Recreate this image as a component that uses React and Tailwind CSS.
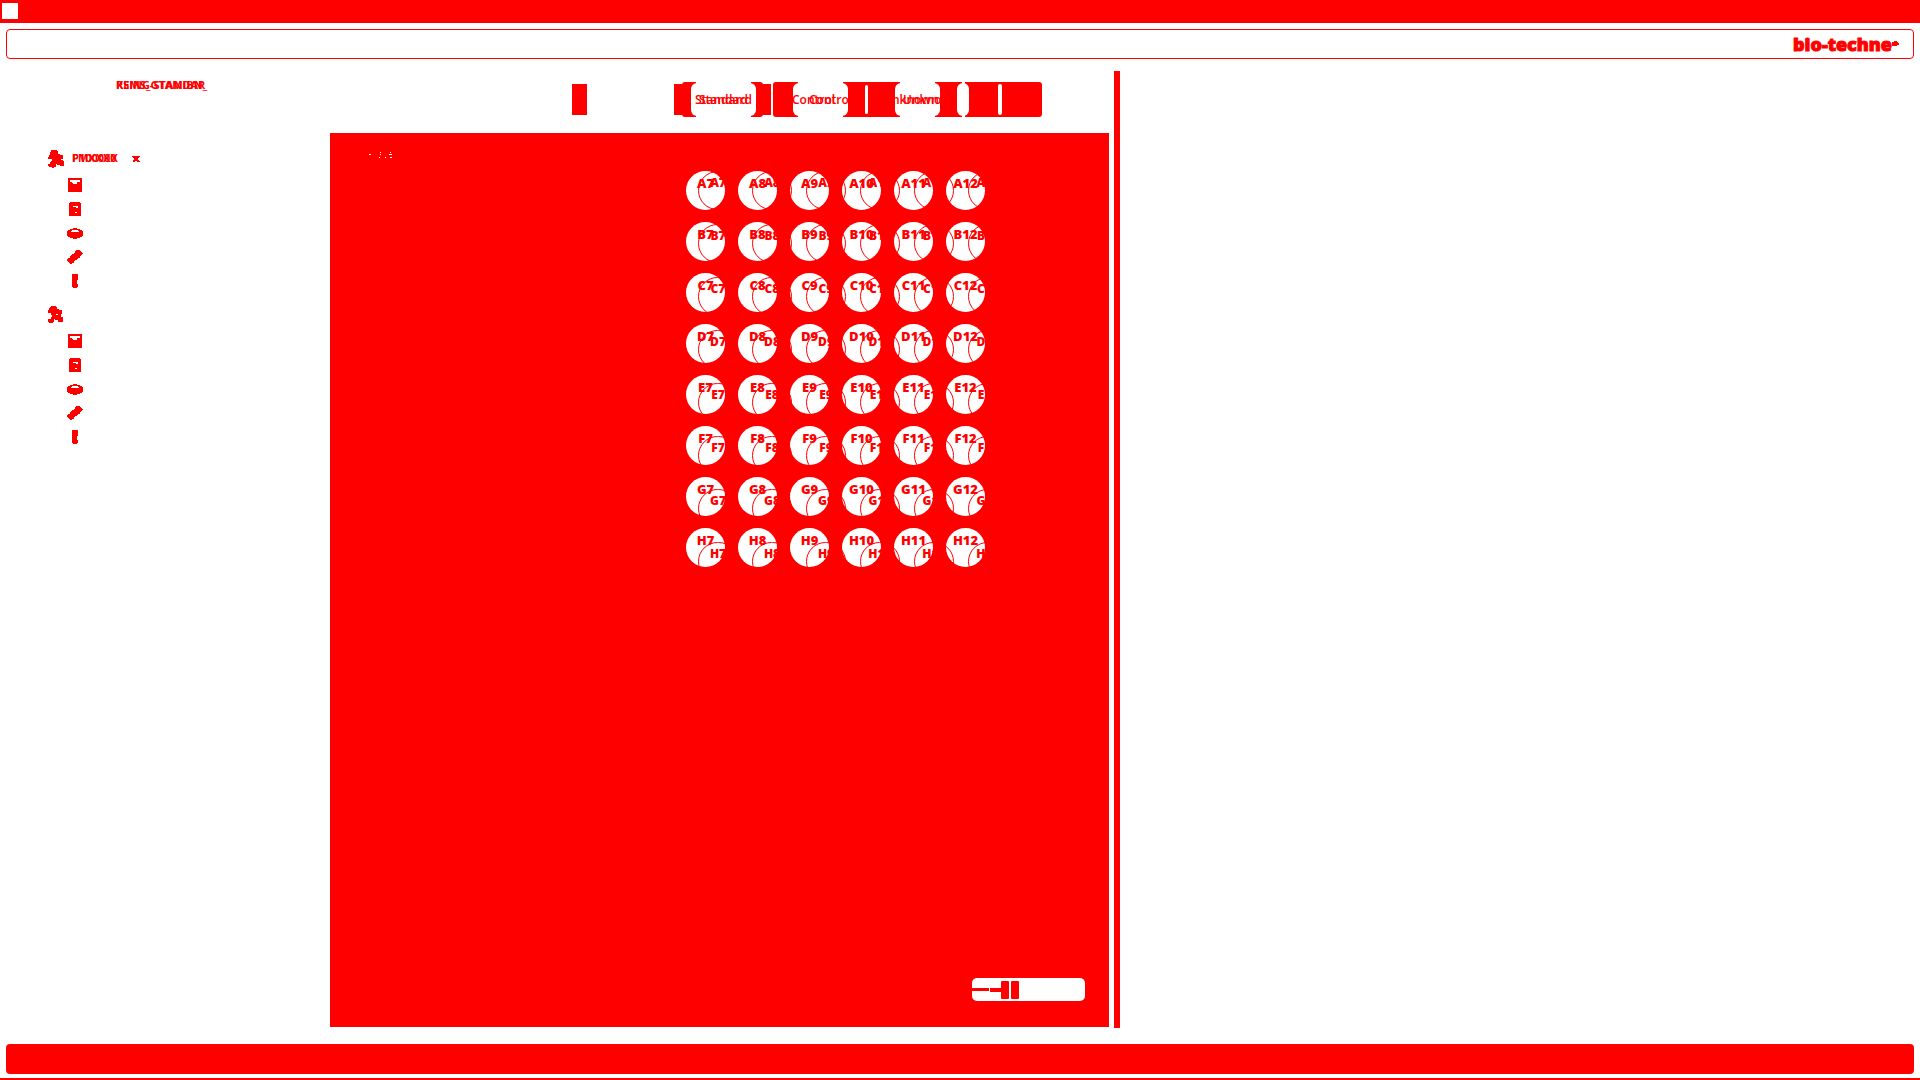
import React from "react";

const ROWS = ["A", "B", "C", "D", "E", "F", "G", "H"];
const COLS = [7, 8, 9, 10, 11, 12];
const WELLS = ROWS.flatMap((r) => COLS.map((c) => r + c));

const PERSON_A =
  "M33 30H51V33H54V42H60V45H69V57H63V60H69V63H72V78H60V75H51V72H48V81H42V84H36V81H27V78H24V72H30V66H33V63H36V57H24V51H27V45H30V36H33Z";
const PERSON_B =
  "M33 33H48V36H51V42H57V45H66V57H63V66H69V81H54V75H45V72H42V81H39V84H27V81H24V72H33V66H36V60H33V54H24V45H27V39H30V36H33Z M48 57h6v3h-6z";

const ICONS = [
  { w: 14, h: 14, box: "84 114 42 42", d: "M84 114H126V156H84Z M90 120H120V126H111V132H99V129H96V126H90Z" },
  { w: 12, h: 14, box: "87 186 36 42", d: "M90 186H120V189H123V228H87V189H90Z M99 198H114V204H108V201H99Z M105 216H111V219H105Z" },
  { w: 16, h: 11, box: "81 267 48 33", d: "M99 267H111V270H120V273H126V276H129V291H126V294H120V297H111V300H99V297H90V294H84V291H81V276H84V273H90V270H99Z M96 273H114V276H117V279H93V276H96Z" },
  { w: 16, h: 14, box: "81 330 48 42", d: "M108 330H120V333H123V336H126V339H129V342H126V345H123V348H120V354H114V357H111V360H105V363H102V369H96V372H90V369H87V366H84V363H81V357H84V354H90V348H93V345H96V342H102V339H105V333H108Z" },
  { w: 6, h: 14, box: "96 402 18 42", d: "M96 402H114V420H111V432H114V441H111V444H99V441H96Z" },
];

function Group({ person, box, children }) {
  return (
    <li>
      <div className="flex h-7 items-center pl-12">
        <svg width="16" height="18" viewBox={box} fill="#f00" fillRule="evenodd" shapeRendering="crispEdges">
          <path d={person} />
        </svg>
        {children}
      </div>
      <ul>
        {ICONS.map((i) => (
          <li key={i.box} className="ml-16 flex h-6 w-[22px] items-center justify-center">
            <svg width={i.w} height={i.h} viewBox={i.box} fill="#f00" fillRule="evenodd" shapeRendering="crispEdges">
              <path d={i.d} />
            </svg>
          </li>
        ))}
      </ul>
    </li>
  );
}

function TypeButton({ label, size, first, second }) {
  return (
    <button
      type="button"
      className={
        "relative my-px h-[33px] rounded-md bg-white text-xs font-semibold leading-none before:absolute before:inset-x-[5px] before:-inset-y-px before:bg-white " +
        size
      }
    >
      <span className={"absolute top-[11px] whitespace-nowrap " + first}>{label}</span>
      <span aria-hidden="true" className={"absolute top-[11px] whitespace-nowrap " + second}>
        {label}
      </span>
    </button>
  );
}

export default function App() {
  return (
    <div className="flex min-h-screen flex-col bg-white font-['Open_Sans',sans-serif] text-[#f00]">
      <div className="h-[23px] bg-[#f00] pl-0.5 pt-[3px]">
        <span className="block size-4 bg-white" />
      </div>

      <header className="mx-1.5 mt-1.5 flex h-[30px] items-center justify-end rounded-sm border border-[#f00] pr-3.5">
        <span className="flex items-center text-[18px] font-extrabold leading-none [-webkit-text-stroke:1px_#f00]">
          bio-techne
          <svg width="7" height="5" viewBox="0 0 7 5" fill="#f00" shapeRendering="crispEdges" className="mb-0.5">
            <path d="M2 0H5V1H6V2H7V4H5V5H0V1H2Z" />
          </svg>
        </span>
      </header>

      <main className="mt-3 flex flex-1">
        <aside className="w-[330px] shrink-0">
          <h1 className="ml-[116px] grid h-[26px] items-center text-[11px] font-bold leading-none">
            <span className="col-start-1 row-start-1">RSING-STANDAR</span>
            <span aria-hidden="true" className="col-start-1 row-start-1">KEMS_GTAMIBN_</span>
          </h1>
          <ul className="mt-12 flex flex-col gap-2">
            <Group person={PERSON_A} box="24 30 48 54">
              <span className="mb-1 ml-2 grid w-[47px] text-[11px] font-bold leading-none">
                <span className="col-start-1 row-start-1">P100000</span>
                <span aria-hidden="true" className="col-start-1 row-start-1">FMXXXX</span>
              </span>
              <svg width="8" height="6" viewBox="0 0 8 6" fill="#f00" shapeRendering="crispEdges" className="ml-[13px]">
                <path d="M0 0H8V1H7V2H6V4H7V5H8V6H5V5H3V6H1V4H2V2H1V1H0Z" />
              </svg>
            </Group>
            <Group person={PERSON_B} box="24 33 48 54" />
          </ul>
        </aside>

        <section className="mb-px flex min-w-0 flex-[779] flex-col">
          <div className="flex h-[62px] shrink-0 items-start pl-[242px] pt-[11px]">
            <span className="mt-0.5 h-[31px] w-[15px] bg-[#f00]" />
            <span className="ml-[87px] mt-0.5 h-[31px] w-2 bg-[#f00]" />
            <div className="flex rounded-[3px] bg-[#f00] pl-[9px] pr-[7px]">
              <TypeButton label="Standard" size="w-[65px]" first="left-1" second="left-2" />
            </div>
            <span className="mt-0.5 h-[31px] w-2 bg-[#f00]" />
            <div className="ml-0.5 flex items-start rounded-[3px] bg-[#f00] pl-5">
              <TypeButton label="Control" size="w-[55px]" first="-left-px" second="left-4" />
              <span className="ml-[17px] mt-[3px] h-[29px] w-[3px] rounded-full bg-white" />
              <span className="w-[27px]" />
              <TypeButton label="Unknown" size="w-[45px]" first="-left-3" second="left-2" />
              <span className="w-[17px]" />
              <span className="relative my-px h-[33px] w-3 rounded-md bg-white before:absolute before:-inset-y-px before:left-[5px] before:w-[3px] before:bg-white" />
              <span className="w-[29px]" />
              <span className="mt-0.5 h-[31px] w-1 rounded-full bg-white" />
              <span className="w-10" />
            </div>
          </div>

          <div className="flex flex-1 flex-col justify-between bg-[#f00]">
            <div className="relative flex items-start pl-[39px] pt-[19px]">
              <svg width="24" height="6" viewBox="0 0 24 6" fill="#fff" shapeRendering="crispEdges">
                <path d="M0 2h2v1H0z M11 0h1v1h-1z M11 2h1v1h-1z M10 5h1v1h-1z M16 5h1v1h-1z M21 0h1v1h-1z M20 2h3v1h-3z M21 5h2v1h-2z" />
              </svg>
              <div className="ml-[293px] mt-[19px] grid grid-cols-[repeat(6,39px)] gap-x-[13px] gap-y-3">
                {WELLS.map((w) => (
                  <button
                    key={w}
                    type="button"
                    className="flex size-[39px] items-start justify-center rounded-full bg-white pt-[3px] text-[13px] font-extrabold leading-[18px]"
                  >
                    {w}
                  </button>
                ))}
              </div>
              {/* Offset outlines of the second plate, drawn over the wells */}
              <div
                aria-hidden="true"
                className="pointer-events-none absolute left-[368px] top-[38px] grid grid-cols-[repeat(6,40px)] gap-x-3.5 gap-y-3.5"
              >
                {WELLS.map((w) => (
                  <span
                    key={w}
                    className="flex h-[39px] w-10 items-start justify-center rounded-full border border-[#f00] pt-0.5 text-xs font-extrabold leading-[18px]"
                  >
                    {w}
                  </span>
                ))}
              </div>
            </div>

            <div className="mb-[26px] mr-6 flex h-[23px] w-[113px] items-center self-end rounded-[5px] bg-white">
              <span className="h-[3px] w-[17px] bg-[#f00]" />
              <span className="ml-px h-1 w-[11px] bg-[#f00]" />
              <span className="h-[18px] w-2 rounded-[1px] bg-[#f00]" />
              <span className="ml-0.5 h-[18px] w-2 rounded-[1px] bg-[#f00]" />
            </div>
          </div>
        </section>

        <div className="ml-[5px] w-1.5 bg-[#f00]" />
        <section className="min-w-0 flex-[800]" />
      </main>

      <footer className="mx-1.5 mb-1 mt-4 h-[30px] rounded-sm bg-[#f00]" />
      <div className="h-0.5 bg-[#f00]" />
    </div>
  );
}
